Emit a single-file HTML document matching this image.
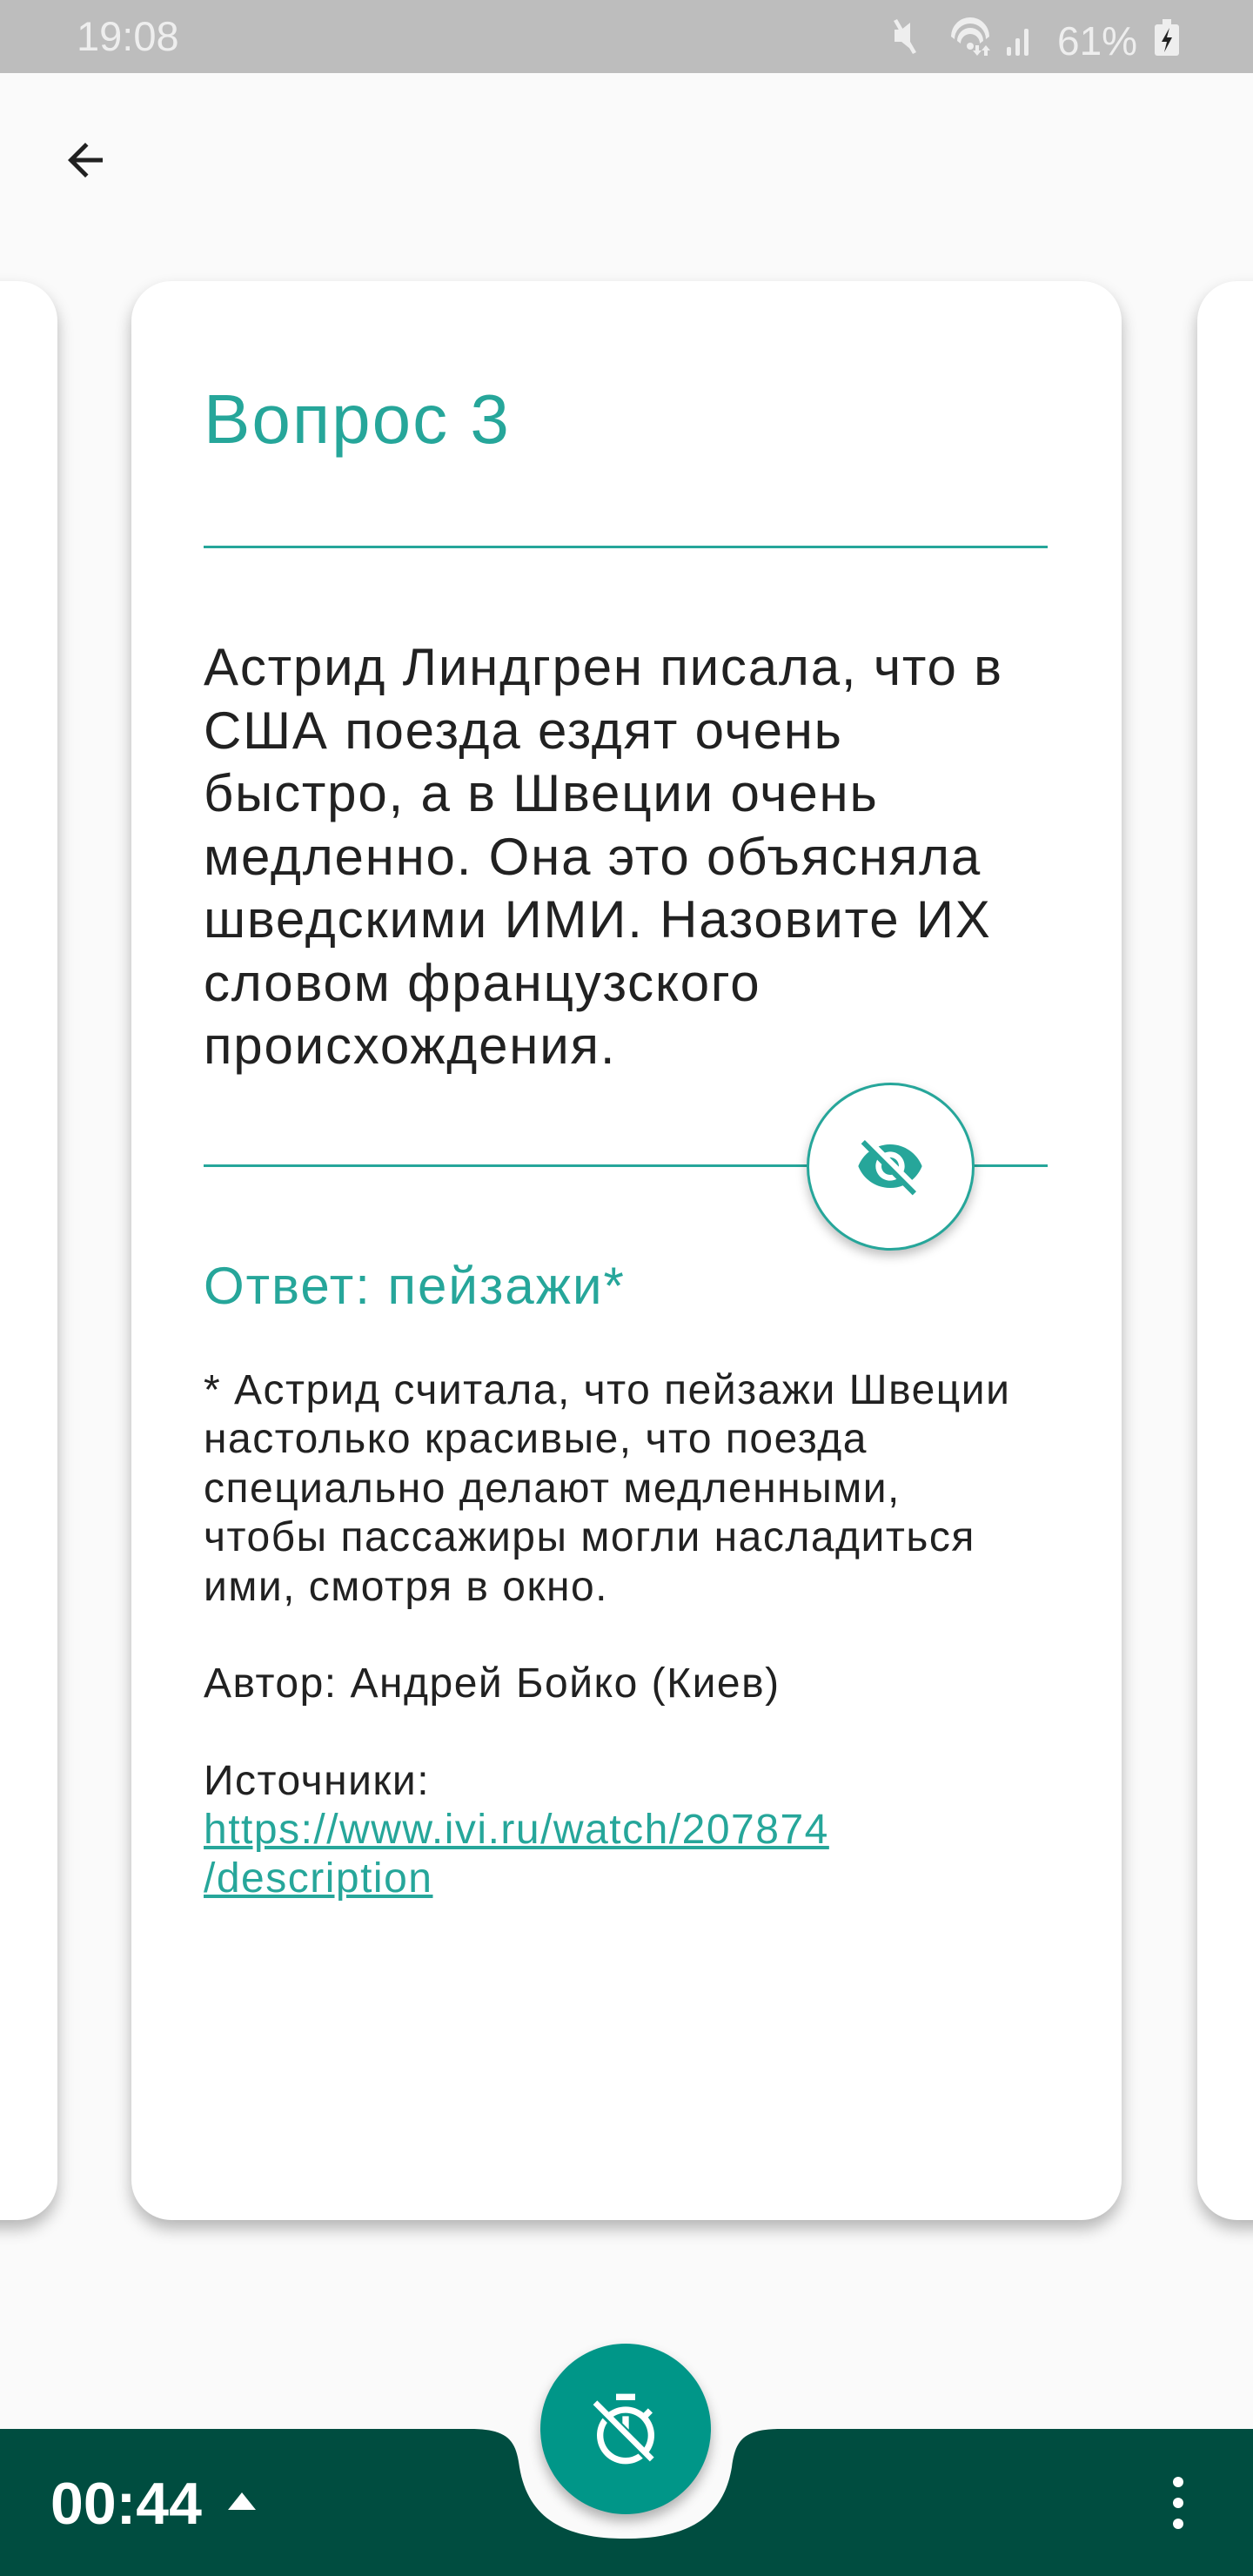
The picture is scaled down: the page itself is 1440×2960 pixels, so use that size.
<!DOCTYPE html>
<html><head><meta charset="utf-8"><style>
*{margin:0;padding:0;box-sizing:border-box}
body{width:1440px;height:2960px;background:#fafafa;position:relative;overflow:hidden;font-family:"Liberation Sans","DejaVu Sans",sans-serif}
.abs{position:absolute}
.status{left:0;top:0;width:1440px;height:84px;background:#bdbdbd}
.card{background:#fff;border-radius:46px;box-shadow:0 10px 18px rgba(0,0,0,.28)}
.t{position:absolute;white-space:nowrap;color:#212121}
.q{font-size:60px;left:234px;letter-spacing:1.8px}
.n{font-size:48px;left:234px;letter-spacing:1.5px}
</style></head><body>
<div class="abs status"></div>
<div class="t" style="left:88px;top:14px;font-size:47px;color:#eee">19:08</div>
<svg class="abs" style="left:1025px;top:20px" width="360" height="48" viewBox="0 0 360 48">
<g fill="#eee"><path d="M3 14h8l10-8v30l-10-8H3z"/><path d="M2 4l4-2 22 38-4 2z" fill="#eee"/>
<path d="M68 22a22 22 0 0 1 44 0l-4 3a17 17 0 0 0-36 0z"/><path d="M75 27a15 15 0 0 1 30 0l-4 3a10 10 0 0 0-22 0z"/><circle cx="90" cy="33" r="4"/>
<path d="M96 32h4v6h3l-5 6-5-6h3z"/><path d="M110 44h-4v-6h-3l5-6 5 6h-3z"/>
<rect x="132" y="34" width="5" height="10" rx="2"/><rect x="142" y="24" width="5" height="20" rx="2"/><rect x="152" y="13" width="5" height="31" rx="2"/>
<text x="190" y="43" font-size="46" font-family="Liberation Sans">61%</text>
<rect x="302" y="8" width="28" height="36" rx="3"/><rect x="311" y="2" width="10" height="7"/></g>
<path d="M319 12l-9 16h6l-3 12 9-17h-6z" fill="#222"/></svg>
<svg class="abs" style="left:68px;top:154px" width="60" height="60" viewBox="0 0 24 24"><path d="M20 11H7.8l5.6-5.6L12 4l-8 8 8 8 1.4-1.4L7.8 13H20z" fill="#212121"/></svg>

<div class="abs card" style="left:-60px;top:323px;width:126px;height:2228px"></div>
<div class="abs card" style="left:1376px;top:323px;width:126px;height:2228px"></div>
<div class="abs card" style="left:151px;top:323px;width:1138px;height:2228px"></div>

<div class="t" style="left:234px;top:436px;font-size:80px;color:#26a69a;letter-spacing:2px">Вопрос 3</div>
<div class="abs" style="left:234px;top:627px;width:970px;height:3px;background:#26a69a"></div>

<div class="t q" style="top:732px">Астрид Линдгрен писала, что в</div>
<div class="t q" style="top:805px">США поезда ездят очень</div>
<div class="t q" style="top:877px">быстро, а в Швеции очень</div>
<div class="t q" style="top:950px">медленно. Она это объясняла</div>
<div class="t q" style="top:1022px">шведскими ИМИ. Назовите ИХ</div>
<div class="t q" style="top:1095px">словом французского</div>
<div class="t q" style="top:1167px">происхождения.</div>

<div class="abs" style="left:234px;top:1338px;width:970px;height:3px;background:#26a69a"></div>
<div class="abs" style="left:927px;top:1244px;width:193px;height:193px;border-radius:50%;background:#fff;border:3px solid #26a69a;box-shadow:0 6px 12px rgba(0,0,0,.25)"></div>
<svg class="abs" style="left:983px;top:1300px" width="80" height="80" viewBox="0 0 24 24"><path fill="#26a69a" d="M12 7c2.760 0 5 2.24 5 5 0 .65-.13 1.26-.36 1.830l2.92 2.92c1.51-1.26 2.7-2.89 3.43-4.75-1.73-4.39-6-7.5-11-7.5-1.4 0-2.74.25-3.98.7l2.16 2.16C10.74 7.13 11.35 7 12 7zM2 4.27l2.28 2.28.46.46C3.08 8.3 1.78 10.02 1 12c1.730 4.39 6 7.5 11 7.5 1.55 0 3.03-.3 4.38-.84l.42.42L19.73 22 21 20.73 3.27 3 2 4.27zM7.53 9.8l1.550 1.55c-.05.21-.08.43-.08.65 0 1.66 1.34 3 3 3 .22 0 .44-.03.65-.08l1.55 1.55c-.67.33-1.41.53-2.2.53-2.76 0-5-2.24-5-5 0-.79.2-1.53.53-2.2zm4.31-.78l3.15 3.15.02-.16c0-1.66-1.34-3-3-3l-.17.01z"/></svg>

<div class="t" style="left:234px;top:1443px;font-size:60px;color:#26a69a;letter-spacing:2px">Ответ: пейзажи*</div>

<div class="t n" style="top:1570px">* Астрид считала, что пейзажи Швеции</div>
<div class="t n" style="top:1626px">настолько красивые, что поезда</div>
<div class="t n" style="top:1683px">специально делают медленными,</div>
<div class="t n" style="top:1739px">чтобы пассажиры могли насладиться</div>
<div class="t n" style="top:1796px">ими, смотря в окно.</div>
<div class="t n" style="top:1907px">Автор: Андрей Бойко (Киев)</div>
<div class="t n" style="top:2019px">Источники:</div>
<div class="t n" style="top:2075px;color:#26a69a;text-decoration:underline">https://www.ivi.ru/watch/207874</div>
<div class="t n" style="top:2131px;color:#26a69a;text-decoration:underline">/description</div>

<svg class="abs" style="left:0;top:2780px" width="1440" height="180" viewBox="0 0 1440 180">
<path d="M0 11H540C585 11 593 25 597 55C607 115 650 137 719 137C788 137 831 115 841 55C845 25 853 11 898 11H1440V180H0Z" fill="#004d40"/></svg>
<div class="abs" style="left:621px;top:2693px;width:196px;height:196px;border-radius:50%;background:#009688;box-shadow:0 8px 14px rgba(0,0,0,.3)"></div>
<svg class="abs" style="left:675px;top:2747px" width="88" height="88" viewBox="0 0 24 24"><path fill="#fff" d="M9 1h6v2H9zM12 21c-3.87 0-7-3.13-7-7 0-1.47.46-2.83 1.23-3.96L4.8 8.61C3.67 10.11 3 11.97 3 14c0 4.97 4.02 9 9 9 2.03 0 3.89-.67 5.39-1.8l-1.43-1.43C14.83 20.54 13.47 21 12 21zm0-14c3.87 0 7 3.13 7 7 0 1.47-.46 2.83-1.23 3.96l1.43 1.43C20.33 17.89 21 16.03 21 14c0-2.12-.74-4.07-1.97-5.61l1.42-1.42-1.41-1.41-1.42 1.42C16.07 5.74 14.12 5 12 5c-2.03 0-3.89.67-5.39 1.8l1.43 1.43C9.17 7.46 10.53 7 12 7zM11 8v2.2l2 2V8zM3.1 3.1L1.8 4.4l17.8 17.8 1.3-1.3z"/></svg>
<div class="t" style="left:58px;top:2838px;font-size:68px;font-weight:bold;color:#fff">00:44</div>
<svg class="abs" style="left:258px;top:2862px" width="40" height="24" viewBox="0 0 40 24"><path d="M20 2L36 22H4Z" fill="#fff"/></svg>
<div class="abs" style="left:1348px;top:2846px;width:12px;height:12px;border-radius:50%;background:#fff"></div>
<div class="abs" style="left:1348px;top:2870px;width:12px;height:12px;border-radius:50%;background:#fff"></div>
<div class="abs" style="left:1348px;top:2894px;width:12px;height:12px;border-radius:50%;background:#fff"></div>
</body></html>
